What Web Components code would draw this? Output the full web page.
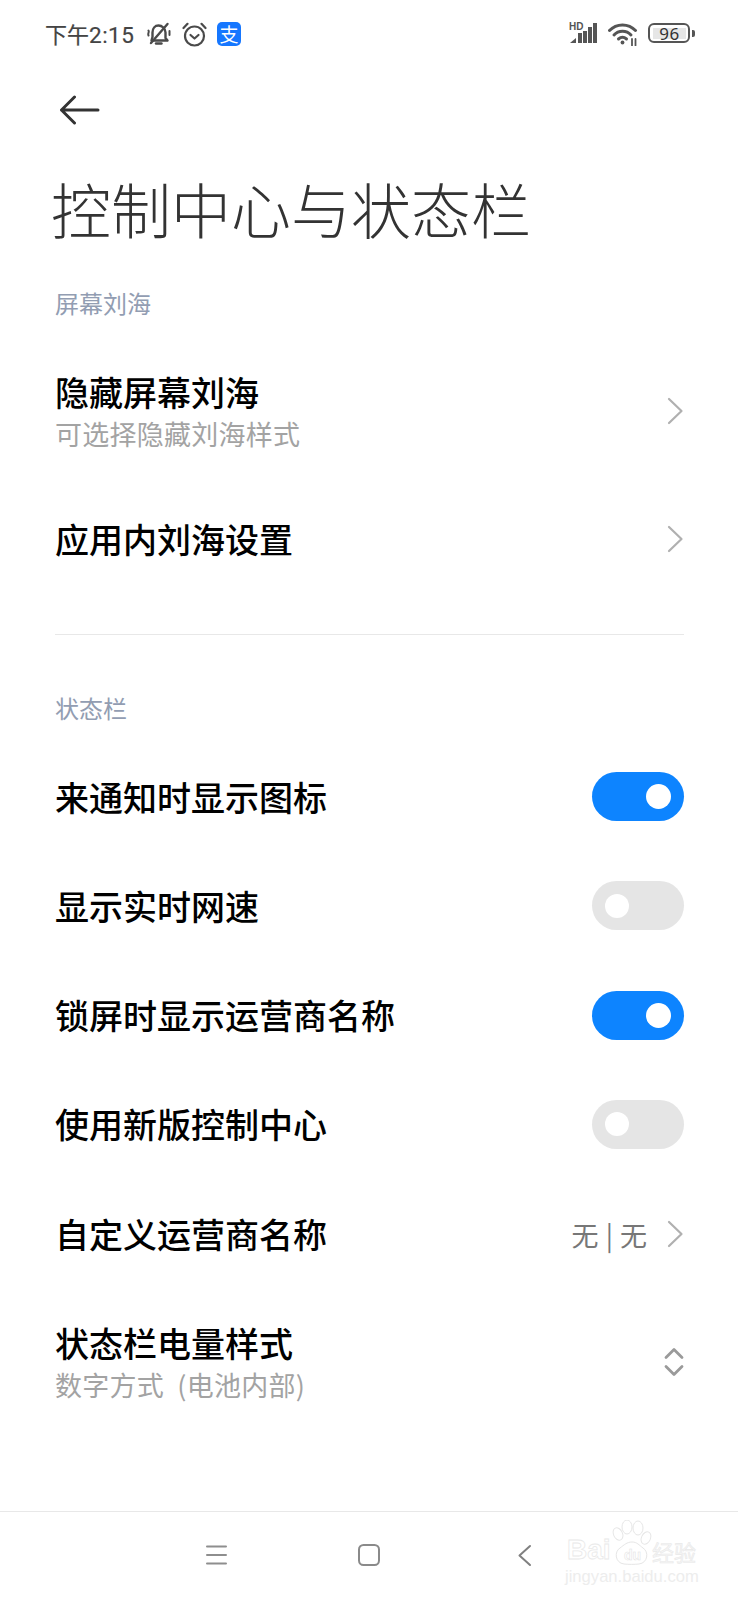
<!DOCTYPE html>
<html lang="zh-CN"><head><meta charset="utf-8"><title>控制中心与状态栏</title>
<style>
html,body{margin:0;padding:0;background:#fff}
body{width:738px;height:1600px;overflow:hidden;font-family:"Noto Sans CJK SC","Noto Sans",sans-serif;color:#000}
settings-page{display:flex;flex-direction:column;height:1600px}
</style></head><body>
<settings-page>
  <status-bar></status-bar>
  <app-header>控制中心与状态栏</app-header>
  <section-label style="margin-top:40px">屏幕刘海</section-label>
  <setting-row h="130" style="margin-top:28px" sub="可选择隐藏刘海样式" kind="chevron">隐藏屏幕刘海</setting-row>
  <setting-row h="126" kind="chevron">应用内刘海设置</setting-row>
  <list-divider></list-divider>
  <section-label style="margin-top:58px">状态栏</section-label>
  <setting-row h="109.25" style="margin-top:19px" kind="on">来通知时显示图标</setting-row>
  <setting-row h="109.25" kind="off">显示实时网速</setting-row>
  <setting-row h="109.25" kind="on">锁屏时显示运营商名称</setting-row>
  <setting-row h="109.25" kind="off">使用新版控制中心</setting-row>
  <setting-row h="110" kind="chevron" value="无 | 无">自定义运营商名称</setting-row>
  <setting-row h="145" kind="updown" sub="数字方式 (电池内部)">状态栏电量样式</setting-row>
  <nav-bar></nav-bar>
</settings-page>
<script>
function def(name, html, setup){
  customElements.define(name, class extends HTMLElement{
    connectedCallback(){
      if(this.shadowRoot) return;
      const r=this.attachShadow({mode:'open'});
      r.innerHTML=html;
      if(setup) setup.call(this,r);
    }
  });
}
def('status-bar',`<style>
:host{display:flex;align-items:center;height:68px;box-sizing:border-box;padding:0 43px 0 45px;flex:none;color:#444}
.t{width:102px;flex:none;font:400 22.5px/24px Roboto,"Noto Sans CJK SC",sans-serif;color:#444;white-space:nowrap;letter-spacing:.5px;-webkit-text-stroke:.2px #444}
.t span{font-family:"Noto Sans CJK SC",sans-serif;font-size:22px;letter-spacing:0}
.sp{flex:1}
svg{display:block;flex:none}
.ali{width:24px;height:24px;border-radius:5px;background:#1677ff;color:#fff;font-size:19px;line-height:24px;text-align:center;margin-left:10px;flex:none}
.bat{position:relative;width:47px;height:24px;margin-left:10px;flex:none}
.bat b{position:absolute;left:5px;top:6px;width:33px;height:11px;background:#e6e6e6}
.bat span{position:absolute;left:5px;width:33px;top:1px;text-align:center;font:400 17px/21px "Noto Sans","Noto Sans CJK SC",sans-serif;color:#333;letter-spacing:.5px}
.bat i{position:absolute;left:0;top:1px;width:42px;height:20px;box-sizing:border-box;border:2.5px solid #555;border-radius:6px}
.bat u{position:absolute;left:44px;top:8px;width:3px;height:7px;border-radius:0 2px 2px 0;background:#555}
</style>
<span class="t"><span>下午</span>2:15</span>
<svg width="24" height="24" viewBox="0 0 24 24" fill="none" stroke="#4a4a4a" stroke-width="2.4" stroke-linecap="round" stroke-linejoin="round"><path d="M5.5 15V10.5C5.5 6.5 8 3.5 11.5 3.5s7 3 7 7V16l2 2.5H4.5z"/><path d="M9 21.5h5.5"/><path d="M4 21L20.5 2"/><path d="M1.5 8.5c1 1.5-1 3 0 5M22.5 9v4" stroke-width="2"/></svg>
<svg style="margin-left:11px" width="25" height="25" viewBox="0 0 25 25" fill="none" stroke="#4a4a4a" stroke-width="2.2" stroke-linecap="round" stroke-linejoin="round"><circle cx="12.5" cy="14" r="9.5"/><path d="M8.5 13l4 3.5 4-3.5"/><path d="M1.5 6L5.5 1.8M23.5 6L19.5 1.8"/></svg>
<div class="ali">支</div>
<div class="sp"></div>
<svg width="30" height="24" viewBox="0 0 30 24"><text x="0" y="8" font-family="Liberation Sans" font-size="10" font-weight="700" fill="#555">HD</text><g fill="#555"><path d="M1 21l6-5v5z"/><rect x="9" y="11" width="4" height="10"/><rect x="14" y="9" width="4" height="12"/><rect x="19" y="5" width="4" height="16"/><rect x="24" y="1" width="4" height="20"/></g></svg>
<svg style="margin-left:9px" width="30" height="24" viewBox="0 0 30 24" fill="none" stroke="#555" stroke-width="3" stroke-linecap="round"><path d="M1.5 8.5C8.5 1 20.5 1 27.5 8.5"/><path d="M6 13C10.5 8 18.5 8 23 13"/><path d="M10.5 17C13 14.8 16 14.8 18.5 17"/><circle cx="14.5" cy="20.5" r="1.9" fill="#555" stroke="none"/><path d="M24 17v6.5M27.5 17v6.5" stroke-width="1.8"/></svg>
<div class="bat"><b></b><span>96</span><i></i><u></u></div>`);

def('app-header',`<style>
:host{display:block;flex:none}
.back{display:block;margin:22px 0 0 60px;height:40px}
h1{margin:38px 0 0 51px;font-weight:300;font-size:60px;line-height:80px;color:#333;white-space:nowrap}
</style>
<svg class="back" width="40" height="40" viewBox="0 0 40 40" fill="none" stroke="#333" stroke-width="3" stroke-linecap="round" stroke-linejoin="round"><path d="M1.5 20H38M14.5 7L1.5 20l13 13"/></svg>
<h1><slot></slot></h1>`);

def('section-label',`<style>
:host{display:block;flex:none;padding-left:55px;font-size:24px;line-height:30px;color:#929db2}
</style><slot></slot>`);

def('list-divider',`<style>
:host{display:block;flex:none;height:1px;margin:32px 54px 0 55px;background:#e8e8e8}
</style>`);

def('toggle-switch',`<style>
:host{display:block;flex:none;width:92px;height:49px;border-radius:25px;background:#e5e5e5;position:relative}
:host([on]){background:#0d84ff}
i{position:absolute;left:13px;top:12.5px;width:24px;height:24px;border-radius:50%;background:#fff}
:host([on]) i{left:53.5px;top:12px;width:25px;height:25px}
</style><i></i>`);

const chev=`<svg width="18" height="28" viewBox="0 0 18 28" fill="none" stroke="#b0b0b0" stroke-width="2.2" stroke-linecap="round" stroke-linejoin="round"><path d="M3 2l12.5 12L3 26"/></svg>`;
const updown=`<svg width="20" height="30" viewBox="0 0 20 30" fill="none" stroke="#9a9a9a" stroke-width="2.8" stroke-linecap="round" stroke-linejoin="round"><path d="M2 10.5l8-8 8 8M2 19.5l8 8 8-8"/></svg>`;
def('setting-row',`<style>
:host{display:flex;align-items:center;flex:none;box-sizing:border-box;padding:0 54px 0 55px}
.txt{flex:1;min-width:0}
.title{font-size:34px;line-height:44px;font-weight:500;color:#000;white-space:nowrap}
.sub{font-size:27px;line-height:36px;margin-top:2px;color:#a3a3a3;white-space:nowrap;letter-spacing:.25px;word-spacing:7px}
.val{font-size:27px;color:#777;margin-right:19px;white-space:nowrap;word-spacing:1px}
.end{display:flex;align-items:center}
.sub:empty{display:none}
</style>
<div class="txt"><div class="title"><slot></slot></div><div class="sub"></div></div>
<div class="val"></div><div class="end"></div>`,function(r){
  this.style.height=this.getAttribute('h')+'px';
  r.querySelector('.sub').textContent=this.getAttribute('sub')||'';
  r.querySelector('.val').textContent=this.getAttribute('value')||'';
  const k=this.getAttribute('kind'),e=r.querySelector('.end');
  if(k==='chevron') e.innerHTML=chev;
  if(k==='updown') e.innerHTML=updown;
  if(k==='on') e.innerHTML='<toggle-switch on></toggle-switch>';
  if(k==='off') e.innerHTML='<toggle-switch></toggle-switch>';
});

def('nav-bar',`<style>
:host{display:flex;align-items:flex-start;flex:none;margin-top:auto;height:89px;border-top:1px solid #e8e8e8;box-sizing:border-box;position:relative;padding:31px 0 0 205px}
svg.i{display:block;flex:none}
.wm{position:absolute;left:565px;top:8px;width:140px;height:66px;pointer-events:none}
.wm svg{position:absolute;left:0;top:0}
.a,.b,.c{position:absolute;white-space:nowrap;-webkit-text-stroke:.8px #e9e9e9;color:#fff}
.a{left:2px;top:12px;font:700 28px/36px "Liberation Sans",sans-serif}
.b{left:59px;top:24px;font:700 14px/22px "Liberation Sans",sans-serif;-webkit-text-stroke:.5px #e2e2e2}
.c{left:87px;top:19px;font:400 22px/24px "Noto Sans CJK SC",sans-serif;-webkit-text-stroke:.6px #e9e9e9;color:#f6f6f6}
.d{position:absolute;left:0;top:47px;font:400 16.6px/20px "Liberation Sans",sans-serif;color:#ededed;white-space:nowrap}
</style>
<svg class="i" width="23" height="24" viewBox="0 0 23 24" stroke="#8e8e8e" stroke-width="2" stroke-linecap="round"><path d="M2 3.5h19M2 12h19M2 20.5h19"/></svg>
<svg class="i" style="margin-left:129px" width="24" height="24" viewBox="0 0 24 24" fill="none" stroke="#8a8a8a" stroke-width="2"><rect x="2" y="2" width="20" height="20" rx="4.5"/></svg>
<svg class="i" style="margin-left:135px" width="16" height="24" viewBox="0 0 16 24" fill="none" stroke="#808080" stroke-width="2" stroke-linecap="round" stroke-linejoin="round"><path d="M14 3L3.5 12.5 14 22"/></svg>
<div class="wm">
<svg width="140" height="66" viewBox="0 0 140 66" fill="#fff" stroke="#e6e6e6" stroke-width="1"><ellipse cx="53" cy="14" rx="4.5" ry="6.5" transform="rotate(-25 53 14)"/><ellipse cx="62" cy="7" rx="5" ry="7"/><ellipse cx="73" cy="8" rx="5" ry="7"/><ellipse cx="81" cy="18" rx="4.5" ry="6.5" transform="rotate(25 81 18)"/><path d="M67 22c5 0 7 3 11 6 6 3.5 5 15-4 16-5 .5-10 .5-15 0-9-1-10-12.5-4-16 4-3 7-6 12-6z"/></svg>
<span class="a">Bai</span><span class="b">du</span><span class="c">经验</span><span class="d">jingyan.baidu.com</span></div>`);
def('settings-page',`<slot></slot>`);
</script>
</body></html>
